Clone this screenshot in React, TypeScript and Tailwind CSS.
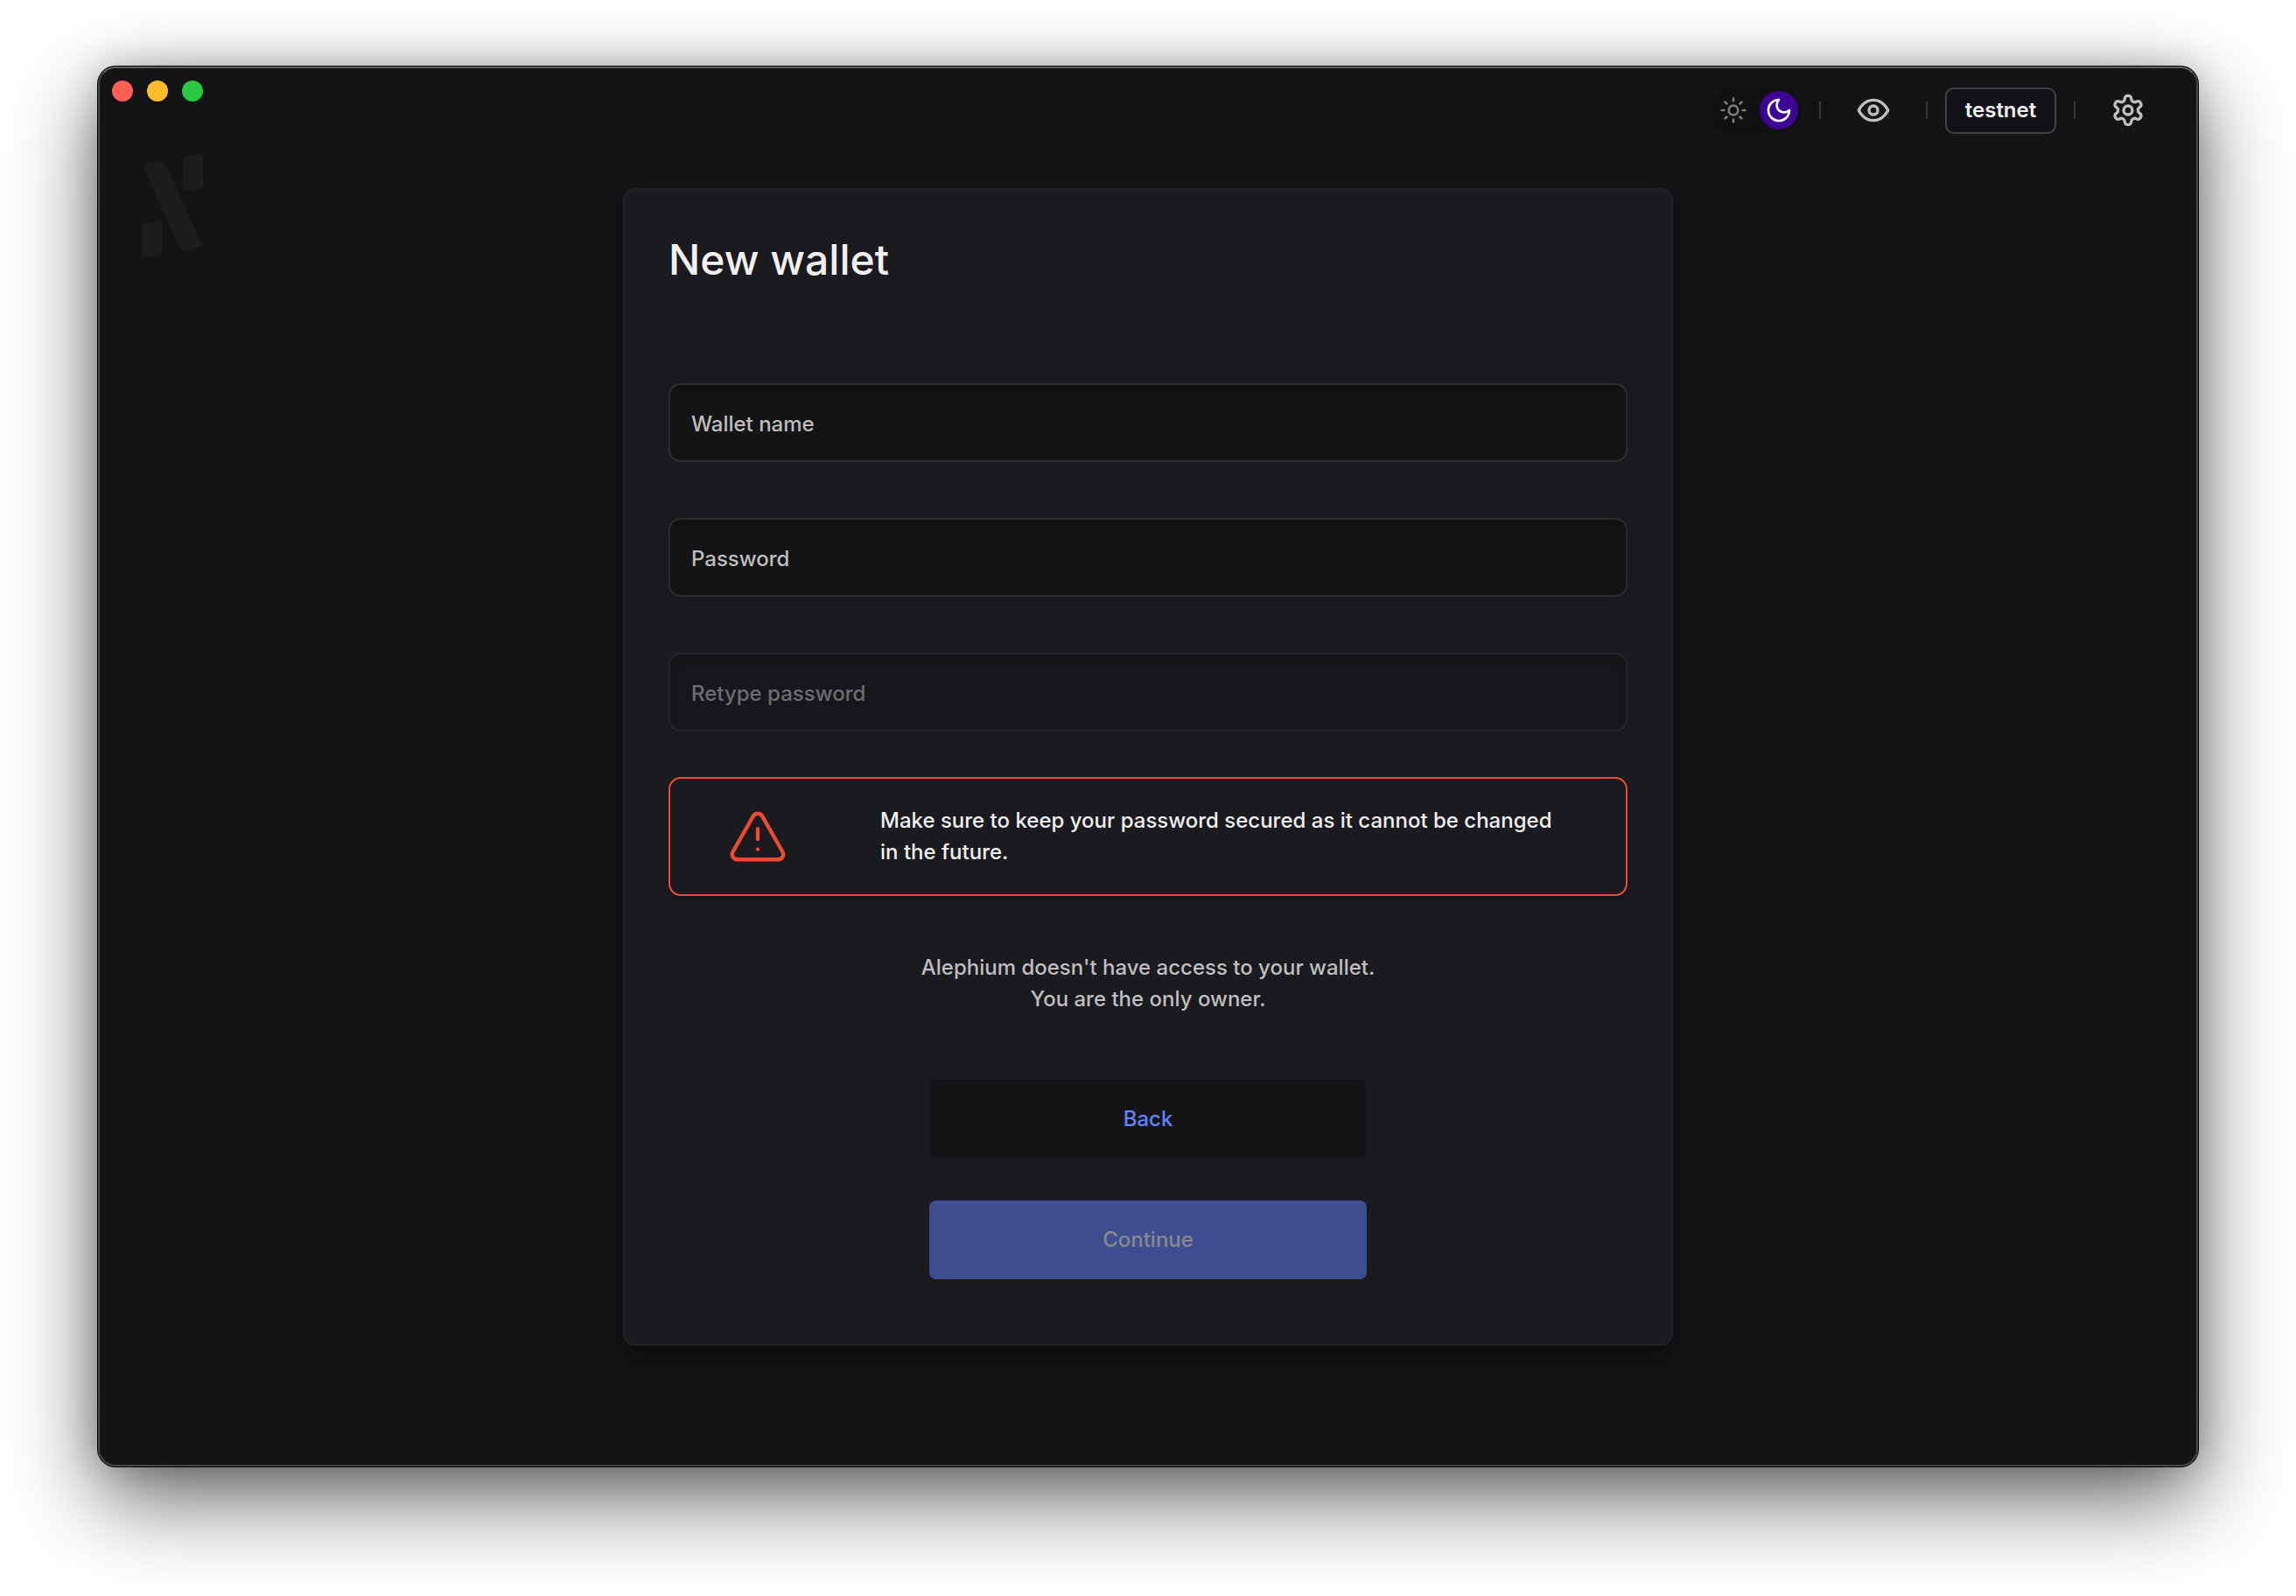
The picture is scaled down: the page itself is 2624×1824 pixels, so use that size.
import React from "react";
import { Sun, TriangleAlert } from "lucide-react";

function Separator() {
  return <span aria-hidden="true" className="h-5 w-[2px] bg-[#37373a]" />;
}

function Icon({ className, children }: { className: string; children: React.ReactNode }) {
  return (
    <svg
      aria-hidden="true"
      viewBox="0 0 24 24"
      fill="none"
      stroke="currentColor"
      strokeWidth={2}
      strokeLinecap="round"
      strokeLinejoin="round"
      className={className}
    >
      {children}
    </svg>
  );
}

function Logo() {
  return (
    <svg aria-label="Alephium" role="img" viewBox="0 0 70 119" className="h-[119px] w-[70px] fill-[#1c1c1e]">
      <path d="M4 11 L22 8 Q25 7.500 27 11 L69 104 Q69.500 106 67 107 L48 111 Q45.500 111.500 44 109 L1 14 Q.5 11.700 4 11 Z" />
      <path d="M50.500 3.200 L68.500 0 Q70 0 70 1.500 L70 36 Q70 38.800 67 39.600 L48.500 43 Q47 43 47 41.500 L47 7.500 Q47 4 50.500 3.200 Z" />
      <path d="M3.500 79.200 L21.500 76 Q23 76 23 77.500 L23 112 Q23 114.800 20 115.600 L1.500 119 Q0 119 0 117.500 L0 83.500 Q0 80 3.500 79.200 Z" />
    </svg>
  );
}

function Field({ id, label, type, disabled }: { id: string; label: string; type: string; disabled?: boolean }) {
  return (
    <input
      id={id}
      type={type}
      aria-label={label}
      placeholder={label}
      disabled={disabled}
      className="h-[90px] w-full rounded-[14px] border-2 border-[#2d2d30] bg-[#141416] px-6 pt-[2px] text-2xl font-medium text-[#f0f0f0] shadow-[inset_0_6px_8px_rgba(0,0,0,0.2)] outline-none placeholder:text-[#bfbfbf] placeholder:opacity-100 disabled:opacity-50"
    />
  );
}

export default function App() {
  return (
    <div className="min-h-screen overflow-hidden bg-white px-28 pt-[76px] pb-[148px] font-['Inter',sans-serif] font-medium">
      <div className="relative flex min-h-[1600px] flex-col rounded-[20px] bg-[#141416] shadow-[0_0_0_1px_#000,0_36px_100px_rgba(0,0,0,0.62),0_0_40px_rgba(0,0,0,0.2)]">
        <div className="pointer-events-none absolute inset-0 rounded-[20px] border-2 border-[#454547] border-t-[#5e6160]" />
        <div className="absolute top-4 left-4 flex gap-4">
          <button aria-label="Close" className="size-6 rounded-full bg-[#ff5f57]" />
          <button aria-label="Minimise" className="size-6 rounded-full bg-[#febc2e]" />
          <button aria-label="Zoom" className="size-6 rounded-full bg-[#28c840]" />
        </div>
        <div className="absolute top-[100px] left-[50px]">
          <Logo />
        </div>

        <header className="flex h-[100px] items-center justify-end pr-5">
          <div className="flex h-[52px] w-26 items-center justify-between rounded-full bg-[#111113] px-1">
            <button aria-label="Light theme" className="grid size-11 place-items-center text-[#7c7c7d]">
              <Sun size={32} />
            </button>
            <button aria-label="Dark theme" className="grid size-11 place-items-center rounded-full bg-[#3d0395] text-white">
              <Icon className="size-8">
                <path d="M12 3a6 6 0 0 0 9 9 9 9 0 1 1-9-9Z" />
              </Icon>
            </button>
          </div>
          <div className="ml-5 flex items-center">
            <Separator />
            <button aria-label="Toggle discreet mode" className="grid w-30 place-items-center text-[#bfbfbf]">
              <Icon className="size-10">
                <path d="M2 12s3-7 10-7 10 7 10 7-3 7-10 7-10-7-10-7Z" />
                <circle cx="12" cy="12" r="3" />
              </Icon>
            </button>
            <Separator />
            <button className="mx-5 h-[53px] w-[127px] rounded-[10px] border-2 border-[#434345] bg-[#121216] text-2xl font-semibold text-[#f0f0f0]">
              testnet
            </button>
            <Separator />
            <button aria-label="Settings" className="grid w-30 place-items-center text-[#bfbfbf]">
              <Icon className="size-10">
                <path d="M12.22 2h-.44a2 2 0 0 0-2 2v.18a2 2 0 0 1-1 1.73l-.43.25a2 2 0 0 1-2 0l-.15-.08a2 2 0 0 0-2.73.73l-.22.38a2 2 0 0 0 .73 2.73l.15.1a2 2 0 0 1 1 1.72v.51a2 2 0 0 1-1 1.74l-.15.09a2 2 0 0 0-.73 2.73l.22.38a2 2 0 0 0 2.73.73l.15-.08a2 2 0 0 1 2 0l.43.25a2 2 0 0 1 1 1.73V20a2 2 0 0 0 2 2h.44a2 2 0 0 0 2-2v-.18a2 2 0 0 1 1-1.73l.43-.25a2 2 0 0 1 2 0l.15.08a2 2 0 0 0 2.73-.73l.22-.39a2 2 0 0 0-.73-2.73l-.15-.08a2 2 0 0 1-1-1.74v-.5a2 2 0 0 1 1-1.74l.15-.09a2 2 0 0 0 .73-2.73l-.22-.38a2 2 0 0 0-2.73-.73l-.15.08a2 2 0 0 1-2 0l-.43-.25a2 2 0 0 1-1-1.73V4a2 2 0 0 0-2-2z" />
                <circle cx="12" cy="12" r="3" />
              </Icon>
            </button>
          </div>
        </header>

        <main className="mx-auto mt-[39px] mb-[138px] flex w-1/2 flex-col rounded-[14px] border-2 border-[#222226] bg-[#1b1a1f] px-[50px] pt-12 pb-[74px] shadow-[0_12px_24px_rgba(0,0,0,0.4)]">
          <h1 className="text-5xl leading-[64px] text-[#f0f0f0]">New wallet</h1>
          <form className="mt-[109px] flex flex-col" onSubmit={(e) => e.preventDefault()}>
            <div className="flex flex-col gap-16">
              <Field id="wallet-name" label="Wallet name" type="text" />
              <Field id="password" label="Password" type="password" />
              <Field id="retype-password" label="Retype password" type="password" disabled />
            </div>
            <div role="alert" className="mt-[52px] flex min-h-[136px] items-center rounded-[14px] border-2 border-[#ed4a34] pr-20 shadow-[0_4px_4px_rgba(0,0,0,0.2)]">
              <div className="grid w-50 shrink-0 place-items-center text-[#ed4a34]">
                <TriangleAlert size={70} strokeWidth={1.5} />
              </div>
              <p className="ml-10 text-2xl leading-9 text-[#f0f0f0]">
                Make sure to keep your password secured as it cannot be changed in the future.
              </p>
            </div>
            <p className="mt-16 text-center text-2xl leading-9 text-[#bfbfbf]">
              Alephium doesn't have access to your wallet.
              <br />
              You are the only owner.
            </p>
            <div className="mx-auto mt-[74px] flex w-[500px] flex-col gap-12">
              <button type="button" className="h-[90px] rounded-lg bg-[#141416] text-2xl text-[#6083ff]">
                Back
              </button>
              <button type="submit" disabled className="h-[90px] rounded-lg bg-[#3e4d8f] text-2xl text-[#87888f]">
                Continue
              </button>
            </div>
          </form>
        </main>
      </div>
    </div>
  );
}
